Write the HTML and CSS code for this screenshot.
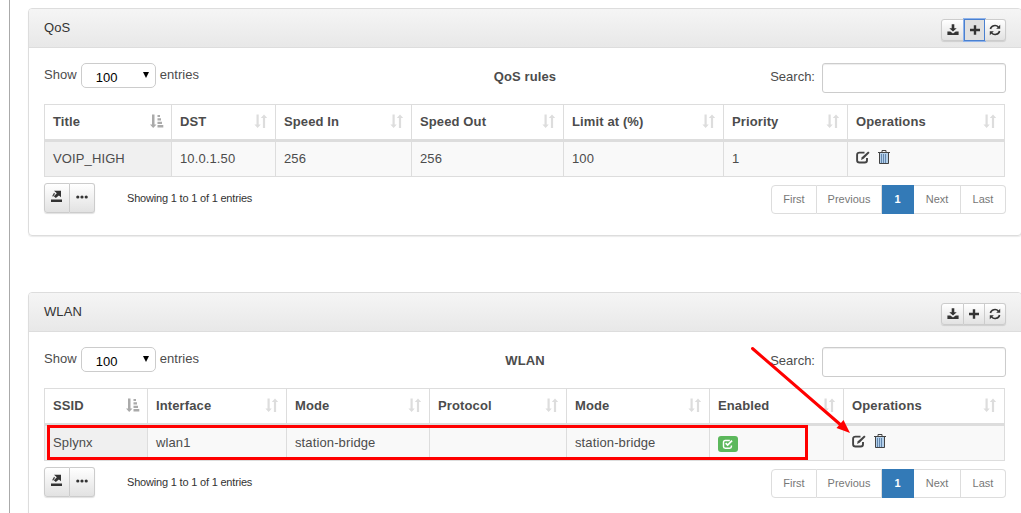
FILE: index.html
```html
<!DOCTYPE html>
<html lang="en">
<head>
<meta charset="utf-8">
<title>QoS / WLAN</title>
<link rel="stylesheet" href="styles.css">
</head>
<body>
<svg class="defs" width="0" height="0">
  <symbol id="i-download" viewBox="0 0 12 12"><path d="M4.7 0.3h2.6v3.9h2.4L6 7.6 2.3 4.2h2.4z"/><path d="M.4 7.6h2.9L6 9.4l2.7-1.8h2.9V11H.4z"/></symbol>
  <symbol id="i-plus" viewBox="0 0 12 12"><path d="M4.8 1.2h2.4v3.6h3.8v2.4H7.2v3.6H4.8V7.2H1V4.8h3.8z"/></symbol>
  <symbol id="i-refresh" viewBox="0 0 12 12"><path d="M1.4 5A4.6 4.3 0 0 1 9.4 3M10.6 7a4.6 4.3 0 0 1-8 2" fill="none" stroke="currentColor" stroke-width="1.6"/><path d="M11.2 .8v4H7.2zM.8 11.2v-4h4z"/></symbol>
  <symbol id="i-export" viewBox="0 0 12 13"><path d="M0 9.5h11V12H0zM3 .7h7v6.600L7.900 5.400 4.800 8 2.800 6.300l3-3z"/><path d="M3 2.800l1 1-2 3-.7-.8z"/></symbol>
  <symbol id="i-dots" viewBox="0 0 12 4"><circle cx="1.8" cy="2" r="1.6"/><circle cx="6" cy="2" r="1.6"/><circle cx="10.2" cy="2" r="1.6"/></symbol>
  <symbol id="i-sort" viewBox="0 0 14 15"><path d="M2.500 .5h2.200v10h2.100L3.600 14 .4 10.500h2.100zM8.900 14h2.200V4h2.100L10 .5 6.800 4h2.100z"/></symbol>
  <symbol id="i-sorted" viewBox="0 0 14 15"><path d="M2 .5h2.500v10h2L3.200 14 0 10.500h2zM7.500 1h2.500v2H7.500zM7.500 4.300h3.500v2.200H7.500zM7.500 7.700h4.500v2.200H7.500zM7.500 11.100h5.800v2.500H7.500z"/></symbol>
  <symbol id="i-edit" viewBox="0 0 14 13"><path d="M8.500 1.600H3.500Q1.100 1.600 1.100 4v5.200q0 2.300 2.400 2.300h5.200q2.300 0 2.300-2.300V7" fill="none" stroke="currentColor" stroke-width="1.900"/><path d="M12.200.4l1.400 1.400-6 6L5 9l.8-2.800z"/></symbol>
  <symbol id="i-check" viewBox="0 0 13 12"><path d="M8.500 1.700H3.500Q1.600 1.700 1.600 3.600v4.600q0 1.900 1.900 1.900h4.800q1.900 0 1.900-1.900V7" fill="none" stroke="currentColor" stroke-width="1.600"/><path d="M3.900 4.600l2.200 2.100 4.800-4.900" fill="none" stroke="currentColor" stroke-width="1.900"/></symbol>
  <symbol id="i-trash" viewBox="0 0 12 15"><path d="M1 3h10v11H1z" fill="#b4d0ea"/><path d="M0 2.500h12M4 2V.5h4V2M1.500 3v10.500h9V3" fill="none" stroke="currentColor"/><path d="M3.500 4v9M5.500 4v9M7.500 4v9" fill="none" stroke="#5a7ea6" stroke-width=".9"/></symbol>
</svg>
<main class="page">
  <section class="panel">
    <header class="panel-head">
      <h2>QoS</h2>
      <div class="tools">
        <button><svg><use href="#i-download"/></svg></button><button class="focused"><svg><use href="#i-plus"/></svg></button><button><svg><use href="#i-refresh"/></svg></button>
      </div>
    </header>
    <div class="panel-body">
      <div class="controls">
        <div class="length">Show <span class="select">100<svg viewBox="0 0 6 6"><path d="M0 0h6L3 6z"/></svg></span> entries</div>
        <strong class="caption">QoS rules</strong>
        <label class="search">Search: <input type="text"></label>
      </div>
      <table class="grid">
        <colgroup><col class="w127"><col class="w104"><col class="w136"><col class="w152"><col class="w160"><col class="w124"><col class="w158"></colgroup>
        <thead><tr>
          <th><div>Title<svg class="on"><use href="#i-sorted"/></svg></div></th>
          <th><div>DST<svg><use href="#i-sort"/></svg></div></th>
          <th><div>Speed In<svg><use href="#i-sort"/></svg></div></th>
          <th><div>Speed Out<svg><use href="#i-sort"/></svg></div></th>
          <th><div>Limit at (%)<svg><use href="#i-sort"/></svg></div></th>
          <th><div>Priority<svg><use href="#i-sort"/></svg></div></th>
          <th><div>Operations<svg><use href="#i-sort"/></svg></div></th>
        </tr></thead>
        <tbody><tr>
          <td>VOIP_HIGH</td><td>10.0.1.50</td><td>256</td><td>256</td><td>100</td><td>1</td>
          <td><div class="ops"><svg class="edit"><use href="#i-edit"/></svg><svg class="trash"><use href="#i-trash"/></svg></div></td>
        </tr></tbody>
      </table>
      <footer class="foot">
        <div class="exports"><button><svg class="exp"><use href="#i-export"/></svg></button><button><svg class="dots"><use href="#i-dots"/></svg></button></div>
        <span class="info">Showing 1 to 1 of 1 entries</span>
        <nav class="pages"><a class="p45">First</a><a class="p66">Previous</a><a class="p32 current">1</a><a class="p47">Next</a><a class="p46">Last</a></nav>
      </footer>
    </div>
  </section>

  <section class="panel">
    <header class="panel-head">
      <h2>WLAN</h2>
      <div class="tools">
        <button><svg><use href="#i-download"/></svg></button><button><svg><use href="#i-plus"/></svg></button><button><svg><use href="#i-refresh"/></svg></button>
      </div>
    </header>
    <div class="panel-body">
      <div class="controls">
        <div class="length">Show <span class="select">100<svg viewBox="0 0 6 6"><path d="M0 0h6L3 6z"/></svg></span> entries</div>
        <strong class="caption">WLAN</strong>
        <label class="search">Search: <input type="text"></label>
      </div>
      <table class="grid">
        <colgroup><col class="w103"><col class="w139"><col class="w143"><col class="w137"><col class="w143"><col class="w134"><col class="w162"></colgroup>
        <thead><tr>
          <th><div>SSID<svg class="on"><use href="#i-sorted"/></svg></div></th>
          <th><div>Interface<svg><use href="#i-sort"/></svg></div></th>
          <th><div>Mode<svg><use href="#i-sort"/></svg></div></th>
          <th><div>Protocol<svg><use href="#i-sort"/></svg></div></th>
          <th><div>Mode<svg><use href="#i-sort"/></svg></div></th>
          <th><div>Enabled<svg><use href="#i-sort"/></svg></div></th>
          <th><div>Operations<svg><use href="#i-sort"/></svg></div></th>
        </tr></thead>
        <tbody><tr>
          <td>Splynx</td><td>wlan1</td><td>station-bridge</td><td></td><td>station-bridge</td>
          <td><span class="badge"><svg><use href="#i-check"/></svg></span></td>
          <td><div class="ops"><svg class="edit"><use href="#i-edit"/></svg><svg class="trash"><use href="#i-trash"/></svg></div></td>
        </tr></tbody>
      </table>
      <footer class="foot">
        <div class="exports"><button><svg class="exp"><use href="#i-export"/></svg></button><button><svg class="dots"><use href="#i-dots"/></svg></button></div>
        <span class="info">Showing 1 to 1 of 1 entries</span>
        <nav class="pages"><a class="p45">First</a><a class="p66">Previous</a><a class="p32 current">1</a><a class="p47">Next</a><a class="p46">Last</a></nav>
      </footer>
    </div>
  </section>
</main>
<svg class="marks" viewBox="0 0 1021 513">
  <rect x="48.500" y="426.500" width="758" height="32" fill="none" stroke="#f00" stroke-width="3"/>
  <path d="M752.500 348.500L842 426" stroke="#f00" stroke-width="3" stroke-linecap="round"/>
  <path d="M850 433L836.500 428L843.500 420z" fill="#f00"/>
</svg>
</body>
</html>
```
FILE: styles.css
```css
* { box-sizing: border-box; }
body {
  margin: 0;
  height: 513px;
  overflow: hidden;
  background: #fff;
  font: 13px/18px "Liberation Sans", Arial, sans-serif;
  color: #4c4c4c;
}
svg { display: block; fill: currentColor; flex: none; }
.defs { position: absolute; }
.page {
  margin-left: 9px;
  border-left: 1px solid #aaa;
  padding: 8px 0 0 18px;
  width: 1013px;
  height: 513px;
  overflow: hidden;
}
.panel {
  width: 994px;
  height: 228px;
  margin-bottom: 56px;
  border: 1px solid #ddd;
  border-radius: 4px;
  box-shadow: 0 1px 1px rgba(0, 0, 0, .08);
}
.panel-head {
  display: flex;
  justify-content: space-between;
  height: 39px;
  padding: 10px 15px 0;
  border-bottom: 1px solid #ddd;
  border-radius: 3px 3px 0 0;
  background: linear-gradient(#f5f5f5, #e8e8e8);
}
h2 { margin: 0; font-size: 13px; font-weight: 400; line-height: 18px; color: #333; letter-spacing: .1px; }
button {
  margin: 0;
  padding: 0;
  border: 1px solid #ccc;
  background: linear-gradient(#fff, #e2e2e2);
  color: #333;
  display: flex;
  align-items: center;
  justify-content: center;
}
.tools { display: flex; height: 22px; border-radius: 3px; box-shadow: 0 1px 1px rgba(0,0,0,.12); }
.tools button { width: 23px; }
.tools button + button { border-left: 0; }
.tools button:nth-child(2) { width: 21px; }
.tools button:last-child { width: 21px; border-radius: 0 3px 3px 0; }
.tools button:first-child { border-radius: 3px 0 0 3px; }
.tools svg { width: 12px; height: 12px; }
.tools .focused { background: #e0e0e0; border: 1px solid #4a80d0; box-shadow: 0 0 0 1px #8fb3ea; }
.panel-body { padding: 15px 15px 0; }
.controls { display: grid; grid-template-columns: 1fr 1fr 1fr; height: 41px; align-items: start; }
.length { display: flex; align-items: flex-start; gap: 4px; line-height: 24px; letter-spacing: .05px; }
.select {
  display: flex;
  justify-content: space-between;
  align-items: flex-start;
  width: 75px;
  height: 25px;
  padding: 0 6px 0 14px;
  border: 1px solid #ccc;
  border-radius: 5px;
  line-height: 27px;
  color: #000;
}
.select svg { width: 6px; height: 6px; margin-top: 8px; }
.caption { text-align: center; line-height: 27px; letter-spacing: .1px; }
.search { display: flex; justify-content: flex-end; gap: 7px; line-height: 27px; }
.search input {
  width: 184px;
  height: 30px;
  border: 1px solid #ccc;
  border-radius: 3px;
  box-shadow: inset 0 1px 1px rgba(0, 0, 0, .075);
}
.grid {
  table-layout: fixed;
  width: 961px;
  border-spacing: 0;
  border-top: 1px solid #ddd;
  border-right: 1px solid #ddd;
}
.grid th, .grid td { padding: 0 8px; border-left: 1px solid #ddd; text-align: left; }
.grid th { height: 37px; padding-right: 7px; border-bottom: 3px solid #ddd; }
.grid th div { display: flex; justify-content: space-between; align-items: center; letter-spacing: .12px; }
.grid th svg { width: 14px; height: 15px; margin-bottom: 2px; color: #ddd; }
.grid th svg.on { color: #aaa; }
.grid td { height: 35px; background: #f9f9f9; border-bottom: 1px solid #ddd; letter-spacing: .12px; }
.grid td:first-child { background: #f0f0f0; }
.w127 { width: 127px; } .w104 { width: 104px; } .w136 { width: 136px; } .w152 { width: 152px; }
.w160 { width: 160px; } .w124 { width: 124px; } .w158 { width: 157px; }
.w103 { width: 103px; } .w139 { width: 139px; } .w143 { width: 143px; } .w137 { width: 137px; }
.w134 { width: 134px; } .w162 { width: 161px; }
.ops { display: flex; align-items: center; gap: 8px; margin-bottom: 3px; color: #444; }
.edit { width: 14px; height: 13px; }
.trash { width: 12px; height: 15px; }
.badge {
  display: flex;
  align-items: center;
  justify-content: center;
  width: 20px;
  height: 16px;
  margin-top: 2px;
  border-radius: 3px;
  background: #5cb85c;
  color: #fff;
}
.badge svg { width: 12px; height: 11px; }
.foot { display: flex; align-items: flex-start; padding-top: 6px; font-size: 11px; }
.exports { display: flex; border-radius: 3px; box-shadow: 0 1px 1px rgba(0, 0, 0, .12); }
.exports button { width: 26px; height: 30px; padding-bottom: 3px; }
.exports button:first-child { border-radius: 3px 0 0 3px; }
.exports button + button { width: 25px; border-left: 0; border-radius: 0 3px 3px 0; }
.exp { width: 12px; height: 13px; }
.dots { width: 12px; height: 4px; }
.info { margin-left: 32px; line-height: 30px; letter-spacing: -.19px; color: #333; }
.pages { display: flex; margin: 2px 0 0 auto; }
.pages a {
  height: 29px;
  border: 1px solid #ddd;
  border-left-width: 0;
  line-height: 27px;
  text-align: center;
  color: #777;
}
.pages a:first-child { border-left-width: 1px; border-radius: 4px 0 0 4px; }
.pages a:last-child { border-radius: 0 4px 4px 0; }
.pages .current { background: #337ab7; border-color: #337ab7; color: #fff; font-weight: 700; }
.p45 { width: 46px; } .p66 { width: 65px; } .p32 { width: 32px; } .p47 { width: 47px; } .p46 { width: 45px; }
.marks { position: absolute; left: 0; top: 0; width: 1021px; height: 513px; }
```
